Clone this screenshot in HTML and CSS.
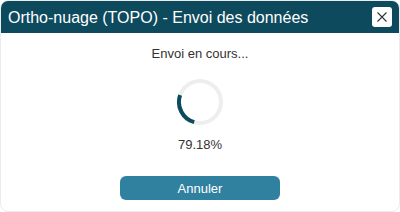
FILE: index.html
```html
<!DOCTYPE html>
<html lang="fr">
<head>
<meta charset="utf-8">
<title>Ortho-nuage (TOPO) - Envoi des données</title>
<link rel="stylesheet" href="styles.css">
</head>
<body>
<div class="dialog">
  <div class="header">
    <span class="title">Ortho-nuage (TOPO) - Envoi des données</span>
    <button class="close" aria-label="Fermer">
      <svg width="12" height="12" viewBox="0 0 12 12"><path d="M1.5 1.5 L10.5 10.5 M10.5 1.5 L1.5 10.5" stroke="#333" stroke-width="1.1" fill="none"/></svg>
    </button>
  </div>
  <div class="content">
    <div class="status">Envoi en cours...</div>
    <svg class="spinner" width="48" height="48" viewBox="0 0 48 48">
      <circle cx="24" cy="24" r="21" stroke="#eeeeee" stroke-width="4" fill="none"/>
      <path d="M4.1 17.2 A21 21 0 0 0 18.2 44.2" stroke="#0d4a5e" stroke-width="4" fill="none"/>
    </svg>
    <div class="percent">79.18%</div>
    <button class="cancel">Annuler</button>
  </div>
</div>
</body>
</html>
```
FILE: styles.css
```css
html, body {
  margin: 0;
  padding: 0;
  background: #ffffff;
}
.dialog {
  width: 400px;
  height: 212px;
  box-sizing: border-box;
  border: 1px solid #ececec;
  border-radius: 8px;
  overflow: hidden;
  font-family: "Liberation Sans", Arial, sans-serif;
  display: flex;
  flex-direction: column;
}
.header {
  height: 33px;
  margin: -1px -1px 0 -1px;
  background: #0d4a5e;
  display: flex;
  align-items: center;
  justify-content: space-between;
  padding: 0 8px 0 8px;
  border-radius: 8px 8px 0 0;
}
.title {
  color: #ffffff;
  font-size: 16px;
  line-height: 18px;
  padding-top: 2px;
}
.close {
  width: 20px;
  height: 20px;
  padding: 0;
  border: none;
  background: #ffffff;
  border-radius: 3px;
  display: flex;
  align-items: center;
  justify-content: center;
}
.content {
  display: flex;
  flex-direction: column;
  align-items: center;
  padding-top: 13px;
}
.status, .percent {
  color: #333333;
  font-size: 13px;
  line-height: 15px;
}
.spinner {
  margin-top: 17px;
}
.percent {
  margin-top: 11px;
}
.cancel {
  margin-top: 24px;
  width: 160px;
  height: 24px;
  border: none;
  border-radius: 6px;
  background: #2f819f;
  color: #ffffff;
  font-family: "Liberation Sans", Arial, sans-serif;
  font-size: 13px;
  padding: 0;
}
```
